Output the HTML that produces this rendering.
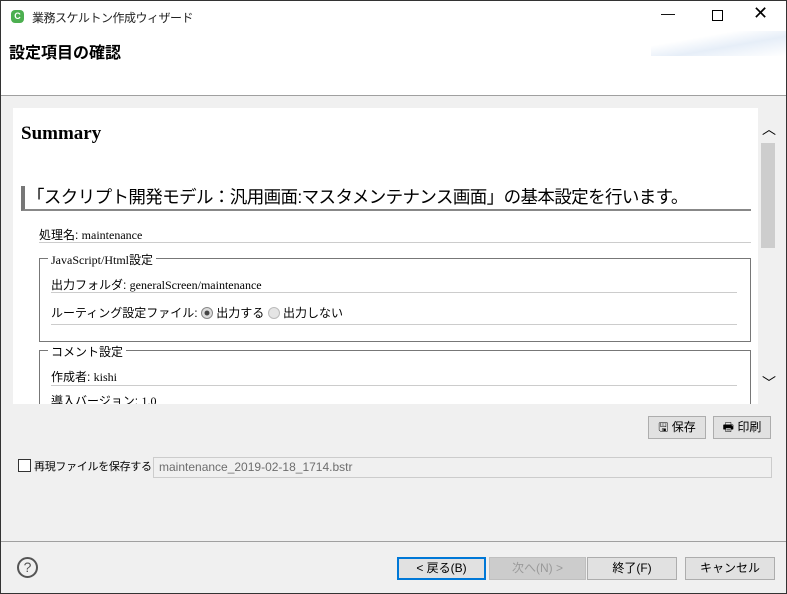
<!DOCTYPE html>
<html><head><meta charset="utf-8"><style>
*{box-sizing:border-box;margin:0;padding:0}
body{width:787px;height:594px;overflow:hidden;background:#f0f0f0;font-family:"Liberation Sans","Noto Sans CJK JP",sans-serif;font-size:12px;color:#000;position:relative;border:1px solid #333}
.abs{position:absolute}
.serif{font-family:"Liberation Serif","Noto Serif CJK SC",serif}
.btn{position:absolute;height:23px;border:1px solid #adadad;background:#e1e1e1;text-align:center;line-height:21px;font-size:12px}
.line{border-bottom:1px solid #ccc}
</style></head><body>
<div class="abs" style="left:0;top:0;width:785px;height:95px;background:#fff;border-bottom:1px solid #a0a0a0"></div>
<div class="abs" style="left:10px;top:9px;width:13px;height:13px;border-radius:4px;background:#4caf50;color:#fff;font-size:9px;font-weight:bold;text-align:center;line-height:13px">C</div>
<div class="abs" style="left:31px;top:8px;font-size:12px;color:#222;letter-spacing:-0.5px">業務スケルトン作成ウィザード</div>
<div class="abs" style="left:660px;top:4px;font-size:14px">—</div>
<div class="abs" style="left:711px;top:9px;width:11px;height:11px;border:1px solid #000"></div>
<div class="abs" style="left:752px;top:2px;font-size:18px">✕</div>
<div class="abs" style="left:650px;top:30px;width:135px;height:25px;background:linear-gradient(170deg,#fff 30%,#e6eef8 60%,#fff 100%)"></div>
<div class="abs" style="left:8px;top:38px;font-size:16px;font-weight:bold">設定項目の確認</div>

<div class="abs" style="left:12px;top:107px;width:745px;height:296px;background:#fff;overflow:hidden">
 <div class="abs serif" style="left:8px;top:15px;font-size:19px;font-weight:bold">Summary</div>
 <div class="abs" style="left:8px;top:78px;width:730px;height:25px;border-left:4px solid #777;border-bottom:2px solid #888;font-size:17.5px;padding-left:2px;line-height:22px;letter-spacing:-0.6px;white-space:nowrap">「スクリプト開発モデル：汎用画面:マスタメンテナンス画面」の基本設定を行います。</div>
 <div class="abs line" style="left:26px;top:118px;width:712px;height:17px"><span>処理名: </span><span class="serif">maintenance</span></div>
 <div class="abs" style="left:26px;top:150px;width:712px;height:84px;border:1px solid #777"></div>
 <div class="abs serif" style="left:35px;top:143px;background:#fff;padding:0 3px;font-size:12px">JavaScript/Html<span style="font-family:'Noto Sans CJK JP',sans-serif">設定</span></div>
 <div class="abs line" style="left:38px;top:168px;width:686px;height:17px"><span>出力フォルダ: </span><span class="serif">generalScreen/maintenance</span></div>
 <div class="abs line" style="left:38px;top:196px;width:686px;height:21px">ルーティング設定ファイル: <span style="display:inline-block;width:12px;height:12px;border-radius:50%;border:1px solid #888;background:radial-gradient(#444 30%,#ddd 40%);vertical-align:-2px"></span> 出力する <span style="display:inline-block;width:12px;height:12px;border-radius:50%;border:1px solid #bbb;background:#e5e5e5;vertical-align:-2px"></span> 出力しない</div>
 <div class="abs" style="left:26px;top:242px;width:712px;height:80px;border:1px solid #777"></div>
 <div class="abs" style="left:35px;top:235px;background:#fff;padding:0 3px">コメント設定</div>
 <div class="abs line" style="left:38px;top:260px;width:686px;height:18px"><span>作成者: </span><span class="serif">kishi</span></div>
 <div class="abs" style="left:38px;top:284px">導入バージョン: <span class="serif">1.0</span></div>
</div>
<div class="abs" style="left:757px;top:107px;width:20px;height:296px;background:#f0f0f0"></div>
<div class="abs" style="left:761px;top:118px;font-size:14px">︿</div>
<div class="abs" style="left:760px;top:142px;width:14px;height:105px;background:#cdcdcd"></div>
<div class="abs" style="left:761px;top:372px;font-size:14px">﹀</div>

<div class="btn" style="left:647px;top:415px;width:58px">🖫 保存</div>
<div class="btn" style="left:712px;top:415px;width:58px">🖶 印刷</div>

<div class="abs" style="left:17px;top:458px;width:13px;height:13px;border:1px solid #333;background:#fff"></div>
<div class="abs" style="left:33px;top:457px;font-size:11px;letter-spacing:-0.3px;white-space:nowrap">再現ファイルを保存する</div>
<div class="abs" style="left:152px;top:456px;width:619px;height:21px;border:1px solid #ccc;background:#f0f0f0;color:#6d6d6d;padding-left:5px;line-height:19px">maintenance_2019-02-18_1714.bstr</div>

<div class="abs" style="left:0;top:540px;width:785px;border-top:1px solid #a0a0a0"></div>
<div class="abs" style="left:16px;top:556px;width:21px;height:21px;border-radius:50%;border:2px solid #555;text-align:center;line-height:17px;font-size:14px;color:#555">?</div>
<div class="btn" style="left:396px;top:556px;width:89px;border:2px solid #0078d7;line-height:19px">&lt; 戻る(B)</div>
<div class="btn" style="left:488px;top:556px;width:97px;color:#9a9a9a;background:#ccc;border-color:#bfbfbf">次へ(N) &gt;</div>
<div class="btn" style="left:586px;top:556px;width:90px">終了(F)</div>
<div class="btn" style="left:684px;top:556px;width:90px">キャンセル</div>
</body></html>
